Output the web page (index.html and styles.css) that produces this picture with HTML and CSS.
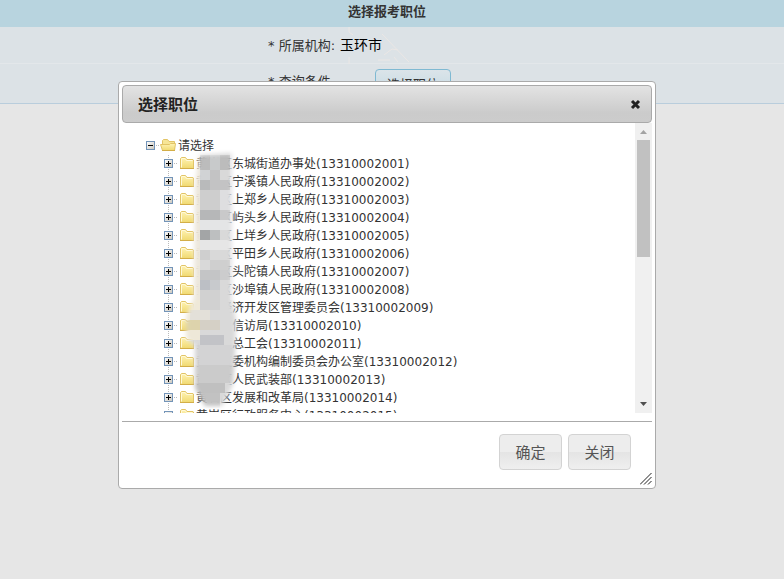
FILE: index.html
```
<!DOCTYPE html>
<html lang="zh-CN">
<head>
  <meta charset="UTF-8">
  <meta name="viewport" content="width=device-width, initial-scale=1.0">
  <title>选择报考职位</title>
  <link rel="stylesheet" href="styles.css">
</head>
<body>
  <!-- Shared icons -->
  <svg class="sprite" width="0" height="0" aria-hidden="true">
    <defs>
      <linearGradient id="box-fill" x1="0" y1="0" x2="1" y2="1">
        <stop offset="0" stop-color="#ffffff"/>
        <stop offset="1" stop-color="#c9c5bb"/>
      </linearGradient>
      <linearGradient id="folder-fill" x1="0" y1="0" x2="0" y2="1">
        <stop offset="0" stop-color="#fff3b4"/>
        <stop offset="1" stop-color="#f0d970"/>
      </linearGradient>
    </defs>
    <symbol id="plus" viewBox="0 0 18 18">
      <path d="M14 8.5h4" stroke="#bbb" stroke-dasharray="1 1"/>
      <rect x="4.5" y="4.5" width="8" height="8" fill="url(#box-fill)" stroke="#7394b8"/>
      <path d="M6 8.5h5M8.5 6v5" stroke="#000"/>
    </symbol>
    <symbol id="minus" viewBox="0 0 18 18">
      <path d="M14 8.5h4" stroke="#bbb" stroke-dasharray="1 1"/>
      <rect x="4.5" y="4.5" width="8" height="8" fill="url(#box-fill)" stroke="#7394b8"/>
      <path d="M6 8.5h5" stroke="#000"/>
    </symbol>
    <symbol id="folder" viewBox="0 0 16 18">
      <path d="M2.500 13.500v-10l1-1h4l1.500 2h6l.5.500v8.500z" fill="url(#folder-fill)" stroke="#e2c466"/>
      <path d="M3.500 12.500V4l.5-.5h3l1.500 2h6" fill="none" stroke="#fff9d8"/>
      <path d="M2 13.500h14" stroke="#d3ae48"/>
    </symbol>
    <symbol id="folder-open" viewBox="0 0 16 18">
      <path d="M2.500 8.500v-5l1-1h4l1.500 2h5.500v9h-11z" fill="#f6e596" stroke="#e2c466"/>
      <path d="M.5 7.500h9l1-1h5l-1 7h-12z" fill="url(#folder-fill)" stroke="#e2c466"/>
      <path d="M2 13.500h13" stroke="#d3ae48"/>
    </symbol>
  </svg>

  <!-- Page form -->
  <main class="page">
    <h1 class="page-title">选择报考职位</h1>
    <div class="form-row">
      <span class="label">* 所属机构:</span>
      <span class="value">玉环市</span>
      <svg class="watermark" viewBox="0 0 90 37" aria-hidden="true">
        <path d="M9 0v5l4 3M42 7l27 28M9 30v7M44 28l8-6 6 1M38 33h12M58 35l-4-5" fill="none" stroke="#ebe7e5"/>
      </svg>
    </div>
    <div class="form-row">
      <span class="label">* 查询条件</span>
      <button type="button" class="pick">选择职位</button>
    </div>
  </main>

  <!-- Position dialog -->
  <div class="overlay">
    <section class="dialog" role="dialog" aria-labelledby="dialog-title">
      <header class="dialog-head">
        <h2 id="dialog-title">选择职位</h2>
        <button type="button" class="close" aria-label="关闭窗口">
          <svg width="11" height="11" viewBox="0 0 11 11"><path d="M2 2l7 7M9 2l-7 7" stroke="#222" stroke-width="3"/></svg>
        </button>
      </header>

      <div class="dialog-body">
        <div class="tree">
          <div class="node root"><button type="button" class="toggle" aria-label="收起"><svg><use href="#minus"/></svg></button><svg class="folder"><use href="#folder-open"/></svg><a href="#">请选择</a></div>
          <ul class="branch">
            <li class="node"><button type="button" class="toggle" aria-label="展开"><svg><use href="#plus"/></svg></button><svg class="folder"><use href="#folder"/></svg><a href="#">黄岩区东城街道办事处<span class="code">(13310002001)</span></a></li>
            <li class="node"><button type="button" class="toggle" aria-label="展开"><svg><use href="#plus"/></svg></button><svg class="folder"><use href="#folder"/></svg><a href="#">黄岩区宁溪镇人民政府<span class="code">(13310002002)</span></a></li>
            <li class="node"><button type="button" class="toggle" aria-label="展开"><svg><use href="#plus"/></svg></button><svg class="folder"><use href="#folder"/></svg><a href="#">黄岩区上郑乡人民政府<span class="code">(13310002003)</span></a></li>
            <li class="node"><button type="button" class="toggle" aria-label="展开"><svg><use href="#plus"/></svg></button><svg class="folder"><use href="#folder"/></svg><a href="#">黄岩区屿头乡人民政府<span class="code">(13310002004)</span></a></li>
            <li class="node"><button type="button" class="toggle" aria-label="展开"><svg><use href="#plus"/></svg></button><svg class="folder"><use href="#folder"/></svg><a href="#">黄岩区上垟乡人民政府<span class="code">(13310002005)</span></a></li>
            <li class="node"><button type="button" class="toggle" aria-label="展开"><svg><use href="#plus"/></svg></button><svg class="folder"><use href="#folder"/></svg><a href="#">黄岩区平田乡人民政府<span class="code">(13310002006)</span></a></li>
            <li class="node"><button type="button" class="toggle" aria-label="展开"><svg><use href="#plus"/></svg></button><svg class="folder"><use href="#folder"/></svg><a href="#">黄岩区头陀镇人民政府<span class="code">(13310002007)</span></a></li>
            <li class="node"><button type="button" class="toggle" aria-label="展开"><svg><use href="#plus"/></svg></button><svg class="folder"><use href="#folder"/></svg><a href="#">黄岩区沙埠镇人民政府<span class="code">(13310002008)</span></a></li>
            <li class="node"><button type="button" class="toggle" aria-label="展开"><svg><use href="#plus"/></svg></button><svg class="folder"><use href="#folder"/></svg><a href="#">黄岩经济开发区管理委员会<span class="code">(13310002009)</span></a></li>
            <li class="node"><button type="button" class="toggle" aria-label="展开"><svg><use href="#plus"/></svg></button><svg class="folder"><use href="#folder"/></svg><a href="#">黄岩区信访局<span class="code">(13310002010)</span></a></li>
            <li class="node"><button type="button" class="toggle" aria-label="展开"><svg><use href="#plus"/></svg></button><svg class="folder"><use href="#folder"/></svg><a href="#">黄岩区总工会<span class="code">(13310002011)</span></a></li>
            <li class="node"><button type="button" class="toggle" aria-label="展开"><svg><use href="#plus"/></svg></button><svg class="folder"><use href="#folder"/></svg><a href="#">黄岩区委机构编制委员会办公室<span class="code">(13310002012)</span></a></li>
            <li class="node"><button type="button" class="toggle" aria-label="展开"><svg><use href="#plus"/></svg></button><svg class="folder"><use href="#folder"/></svg><a href="#">黄岩区人民武装部<span class="code">(13310002013)</span></a></li>
            <li class="node"><button type="button" class="toggle" aria-label="展开"><svg><use href="#plus"/></svg></button><svg class="folder"><use href="#folder"/></svg><a href="#">黄岩区发展和改革局<span class="code">(13310002014)</span></a></li>
            <li class="node"><button type="button" class="toggle" aria-label="展开"><svg><use href="#plus"/></svg></button><svg class="folder"><use href="#folder"/></svg><a href="#">黄岩区行政服务中心<span class="code">(13310002015)</span></a></li>
          </ul>

          <!-- Mosaic over the district names -->
          <svg class="mosaic" width="60" height="270" viewBox="180 145 60 270" aria-hidden="true">
            <defs>
              <filter id="soft" x="-20%" y="-10%" width="140%" height="120%"><feGaussianBlur stdDeviation="2"/></filter>
              <mask id="brush" maskUnits="userSpaceOnUse" x="180" y="145" width="60" height="270">
                <path d="M199 155L232 153L232 300L236 320L235 355L233 385L222 406L205 406L195 388L195 346L186 338L186 316L194 298L195 185Z" fill="#fff" filter="url(#soft)"/>
              </mask>
            </defs>
            <g mask="url(#brush)" shape-rendering="crispEdges">
              <path d="M180 145h60v270h-60z" fill="#d9d9d9"/>
              <path d="M190 145h10v155h-10z" fill="#ece7dc"/>
              <path d="M180 300h20v20h-20z" fill="#efe9d8"/>
              <path d="M180 320h20v10h-20z" fill="#ddd3ac"/>
              <path d="M180 330h20v10h-20z" fill="#eee8d8"/>
              <path d="M230 145h10v155h-10z" fill="#e4e3e6"/>
              <path d="M200 155h10v15h-10zM220 155h10v15h-10z" fill="#bcbcbc"/>
              <path d="M210 155h10v15h-10z" fill="#c8cacb"/>
              <path d="M200 170h10v10h-10z" fill="#d1d3d5"/>
              <path d="M210 170h10v20h-10zM220 180h10v10h-10z" fill="#c3c3c4"/>
              <path d="M200 180h10v10h-10z" fill="#b9babb"/>
              <path d="M200 190h20v20h-20z" fill="#cecece"/>
              <path d="M220 190h10v20h-10z" fill="#dedee0"/>
              <path d="M200 210h20v10h-20z" fill="#b6b7b8"/>
              <path d="M220 210h10v10h-10z" fill="#c9c9ca"/>
              <path d="M200 220h30v10h-30z" fill="#e4e5e6"/>
              <path d="M200 230h10v10h-10z" fill="#a3a5a6"/>
              <path d="M210 230h10v10h-10z" fill="#bdbfc0"/>
              <path d="M200 240h30v10h-30z" fill="#e6e6e6"/>
              <path d="M200 250h10v10h-10zM210 260h20v10h-20z" fill="#cfcfcf"/>
              <path d="M200 270h20v10h-20z" fill="#c4c5c6"/>
              <path d="M220 270h10v10h-10z" fill="#cccccd"/>
              <path d="M200 280h10v10h-10z" fill="#bcbfc5"/>
              <path d="M210 280h10v10h-10z" fill="#c8cacd"/>
              <path d="M200 290h20v20h-20z" fill="#d1d1d1"/>
              <path d="M190 310h20v10h-20z" fill="#e3e0d9"/>
              <path d="M200 320h20v10h-20z" fill="#d5d0c6"/>
              <path d="M200 335h24v10h-24z" fill="#c2c3c7"/>
              <path d="M190 345h50v20h-50z" fill="#d3d3d4"/>
              <path d="M190 365h50v18h-50z" fill="#cbcbcb"/>
              <path d="M190 383h35v10h-35z" fill="#c0c0c0"/>
              <path d="M200 393h20v15h-20z" fill="#c2c2c2"/>
            </g>
          </svg>
        </div>
        <div class="scrollbar" aria-hidden="true">
          <svg width="17" height="17" viewBox="0 0 17 17"><path d="M5 11h7L8.500 7z" fill="#a3a3a3"/></svg>
          <div class="thumb"></div>
          <svg class="down" width="17" height="17" viewBox="0 0 17 17"><path d="M5 6h7l-3.500 4z" fill="#505050"/></svg>
        </div>
      </div>

      <footer class="dialog-foot">
        <button type="button">确定</button>
        <button type="button">关闭</button>
      </footer>
      <svg class="grip" width="12" height="12" viewBox="0 0 12 12" aria-hidden="true"><path d="M0 11.500L11.500 0M4 11.500L11.500 4M8 11.500L11.500 8" stroke="#222"/></svg>
    </section>
  </div>
</body>
</html>
```
FILE: styles.css
```
* {
  box-sizing: border-box;
}
body {
  margin: 0;
  min-height: 100vh;
  background-color: #e6e6e6;
  color: #333;
  font-family: "Noto Sans CJK SC", sans-serif;
  font-size: 13px;
}
button {
  font-family: inherit;
  cursor: pointer;
}
.sprite {
  position: absolute;
}

/* page form */
.page {
  background-color: #dce2e6;
  border-bottom: 1px solid #b9cddc;
}
.page-title {
  margin: 0;
  padding-right: 10px;
  height: 27px;
  line-height: 22px;
  background-color: #b8d4df;
  text-align: center;
  font-size: 13px;
}
.form-row {
  display: flex;
  align-items: center;
  height: 37px;
  padding-left: 268px;
  border-bottom: 1px solid #e3e7ea;
}
.form-row:last-child {
  height: 39px;
  align-items: flex-start;
  padding-top: 5px;
  border-bottom: none;
}
.form-row:last-child .label {
  padding-top: 2px;
}
.label,
.value {
  padding-bottom: 2px;
}
.label {
  width: 72px;
  font-family: "DejaVu Sans", "Noto Sans CJK SC", sans-serif;
  white-space: nowrap;
}
.value {
  color: #000;
  font-size: 14px;
}
.watermark {
  width: 90px;
  height: 37px;
  margin-left: -42px;
}
.pick {
  margin-left: 35px;
  height: 28px;
  padding: 0 11px;
  border: 1px solid #7fb9d2;
  border-radius: 4px;
  background: linear-gradient(#dbe4e9, #c3d9e3);
  color: #333;
  font-size: 13px;
}

/* dialog */
.overlay {
  position: absolute;
  top: 0;
  left: 0;
  right: 0;
  padding: 81px 128px 0 118px;
}
.dialog {
  position: relative;
  padding: 3px;
  border: 1px solid #aaa;
  border-radius: 4px;
  background-color: #fff;
}
.dialog-head {
  display: flex;
  align-items: center;
  justify-content: space-between;
  height: 38px;
  padding: 0 10px 0 15px;
  border: 1px solid #aaa;
  border-radius: 4px;
  background: linear-gradient(#e3e3e3, #cbcbcb 75%, #ccc);
}
.dialog-head h2 {
  margin: 0;
  padding-bottom: 2px;
  color: #222;
  font-size: 15px;
}
.close {
  display: flex;
  padding: 0;
  border: none;
  background: none;
}
.dialog-body {
  display: flex;
  height: 290px;
}
.tree {
  position: relative;
  flex: 1;
  overflow: hidden;
  padding: 14px 0 0 20px;
  font-size: 12px;
}
.branch {
  margin: 0;
  padding: 0 0 0 18px;
  list-style: none;
  background: repeating-linear-gradient(#bbb 0 1px, transparent 1px 2px) 26px 0 / 1px 100% no-repeat;
}
.node {
  display: flex;
  align-items: flex-start;
  height: 18px;
  line-height: 16px;
  white-space: nowrap;
}
.node a {
  padding-left: 2px;
  color: #333;
  text-decoration: none;
}
.code {
  font-family: "DejaVu Sans", sans-serif;
}
.toggle {
  display: flex;
  padding: 0;
  border: none;
  background: none;
}
.toggle svg {
  width: 18px;
  height: 18px;
}
.folder {
  width: 16px;
  height: 18px;
}
.mosaic {
  position: absolute;
  top: 22px;
  left: 58px;
  pointer-events: none;
}
.scrollbar {
  display: flex;
  flex-direction: column;
  width: 17px;
  background-color: #f0f0f0;
}
.thumb {
  height: 117px;
  margin: 0 2px;
  background-color: #c1c1c1;
}
.down {
  margin-top: auto;
}
.dialog-foot {
  display: flex;
  justify-content: flex-end;
  gap: 6px;
  margin-top: 8px;
  padding: 12px 21px 15px;
  border-top: 1px solid #aaa;
}
.dialog-foot button {
  min-width: 63px;
  height: 36px;
  padding: 0 15px 2px;
  border: 1px solid #d3d3d3;
  border-radius: 4px;
  background: linear-gradient(#ededed 50%, #e4e4e4 50%, #efefef);
  color: #555;
  font-size: 15px;
}
.grip {
  position: absolute;
  right: 3px;
  bottom: 3px;
}
```
